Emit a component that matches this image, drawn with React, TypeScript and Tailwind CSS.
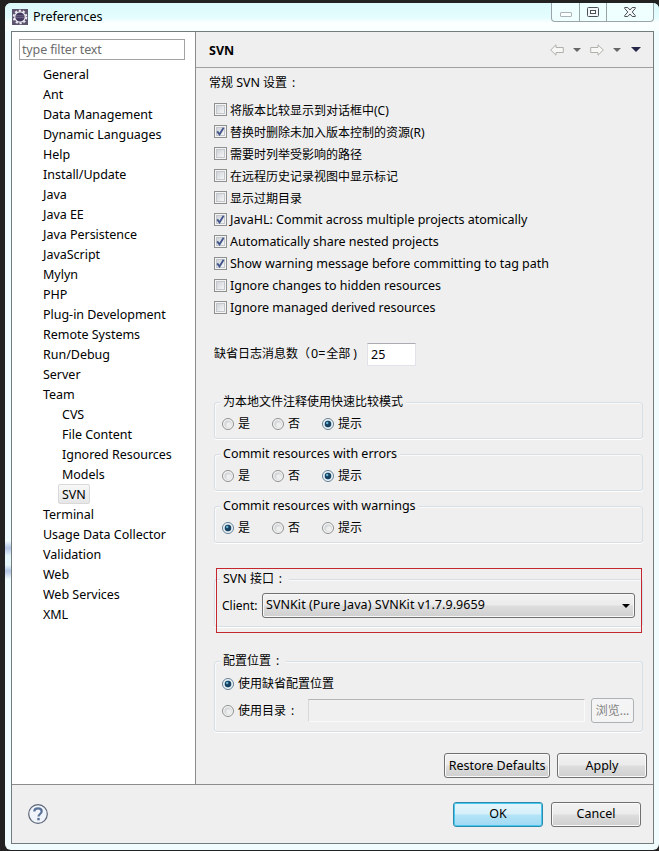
import React, { useState } from 'react';
import clsx from 'clsx';

const treeItems = [
  { label: 'General' },
  { label: 'Ant' },
  { label: 'Data Management' },
  { label: 'Dynamic Languages' },
  { label: 'Help' },
  { label: 'Install/Update' },
  { label: 'Java' },
  { label: 'Java EE' },
  { label: 'Java Persistence' },
  { label: 'JavaScript' },
  { label: 'Mylyn' },
  { label: 'PHP' },
  { label: 'Plug-in Development' },
  { label: 'Remote Systems' },
  { label: 'Run/Debug' },
  { label: 'Server' },
  { label: 'Team' },
  { label: 'CVS', child: true },
  { label: 'File Content', child: true },
  { label: 'Ignored Resources', child: true },
  { label: 'Models', child: true },
  { label: 'SVN', child: true },
  { label: 'Terminal' },
  { label: 'Usage Data Collector' },
  { label: 'Validation' },
  { label: 'Web' },
  { label: 'Web Services' },
  { label: 'XML' },
];

const initialOptions = [
  { label: '将版本比较显示到对话框中(C)', checked: false },
  { label: '替换时删除未加入版本控制的资源(R)', checked: true },
  { label: '需要时列举受影响的路径', checked: false },
  { label: '在远程历史记录视图中显示标记', checked: false },
  { label: '显示过期目录', checked: false },
  { label: 'JavaHL: Commit across multiple projects atomically', checked: true, latin: true },
  { label: 'Automatically share nested projects', checked: true, latin: true },
  { label: 'Show warning message before committing to tag path', checked: true, latin: true },
  { label: 'Ignore changes to hidden resources', checked: false, latin: true },
  { label: 'Ignore managed derived resources', checked: false, latin: true },
];

const latinText = 'text-[12.5px] tracking-[-0.02px]';

// Colon centred in a full-width cell
const Colon: React.FC = () => <span className="inline-block w-3 pl-px text-center">:</span>;

const Checkbox: React.FC<{ checked: boolean }> = ({ checked }) => (
  <span className="mb-px flex h-[13px] w-[13px] shrink-0 border border-[#8e8f8f] bg-[#f4f4f4] p-px">
    <span className="flex h-[9px] w-[9px] border border-[#c3c7cb] bg-linear-to-br from-[#cfd3d8] to-[#f6f6f6]">
      {checked && (
        <svg viewBox="0 0 9 9" className="-m-px h-[9px] w-[9px] shrink-0">
          <path d="M1.2 4.4 L3.5 7.4 L7.6 0.8" fill="none" stroke="#43568c" strokeWidth="1.9" />
        </svg>
      )}
    </span>
  </span>
);

const Radio: React.FC<{ label: React.ReactNode; checked: boolean; onClick?: () => void; className?: string }> = ({
  label,
  checked,
  onClick,
  className,
}) => (
  <button onClick={onClick} className={clsx('flex h-4 items-center gap-1', className)}>
    <svg viewBox="0 0 12 12" className="h-3 w-3 shrink-0">
      <circle cx="6" cy="6" r="5.5" fill="#f6f6f6" stroke={checked ? '#5f7f96' : '#8e8f8f'} />
      <circle cx="6" cy="6" r="3.8" fill={checked ? '#b5d5e6' : '#d5d8da'} />
      {checked && <circle cx="6" cy="6" r="3.2" fill="#17405f" />}
      {checked ? (
        <circle cx="5.2" cy="5" r="1.2" fill="#69b4d6" />
      ) : (
        <circle cx="6.8" cy="6.8" r="2.6" fill="#eeeeee" />
      )}
    </svg>
    <span className="whitespace-nowrap">{label}</span>
  </button>
);

const Group: React.FC<{ title: React.ReactNode; className?: string; children: React.ReactNode }> = ({
  title,
  className,
  children,
}) => (
  <fieldset
    className={clsx(
      'w-[429px] rounded-[3px] border border-[#d5dfe5] shadow-[0_1px_0_#fff,inset_1px_1px_0_#fafafa]',
      className
    )}
  >
    <legend className="ml-[5px] h-4 bg-[#efefef] px-[3px] leading-4">{title}</legend>
    {children}
  </fieldset>
);

const PromptGroup: React.FC<{ title: string; initial: number; latin?: boolean; className?: string }> = ({
  title,
  initial,
  latin,
  className,
}) => {
  const [selected, setSelected] = useState(initial);

  return (
    <Group title={<span className={clsx(latin && latinText)}>{title}</span>} className={clsx('h-[45px]', className)}>
      <div className="mt-[6px] flex pl-[7px]">
        {['是', '否', '提示'].map((label, i) => (
          <Radio
            key={label}
            label={label}
            checked={selected === i}
            onClick={() => setSelected(i)}
            className="w-[50px]"
          />
        ))}
      </div>
    </Group>
  );
};

const PushButton: React.FC<{ label: string; primary?: boolean; className?: string }> = ({
  label,
  primary,
  className,
}) => (
  <button
    className={clsx(
      'h-[25px] rounded-[3px] border leading-[22px] whitespace-nowrap',
      latinText,
      primary
        ? 'border-[#2f8bad] bg-[linear-gradient(#e6f6fc_0%,#d5effa_48%,#b4e3f7_52%,#a0daf3_100%)] shadow-[inset_0_0_0_1px_#48c8ef]'
        : 'border-[#707070] bg-[linear-gradient(#f2f2f2_0%,#ebebeb_48%,#dddddd_52%,#cfcfcf_100%)] shadow-[inset_0_0_0_1px_#fafafa]',
      className
    )}
  >
    {label}
  </button>
);

const EclipseIcon: React.FC = () => (
  <svg viewBox="0 0 16 16" className="h-4 w-4">
    <rect width="16" height="16" fill="#5d5470" />
    <circle cx="8" cy="8" r="6.3" fill="none" stroke="#eeecf3" strokeWidth="2" strokeDasharray="2.2 1.76" />
    <circle cx="8" cy="8" r="5.2" fill="#41375c" stroke="#eeecf3" strokeWidth="1.2" />
    <path d="M3.5 6.8h9M3.5 8.6h9" stroke="#857c9d" strokeWidth="0.7" />
  </svg>
);

const TitleBar: React.FC = () => (
  <div className="flex h-7 justify-between rounded-t-[6px] bg-[linear-gradient(#dcf9fb_0px,#e4fdfe_14px,#fbffff_20px,#f8ffff_28px)] pl-[7px]">
    <div className="flex items-center gap-[5px]">
      <EclipseIcon />
      <span className={latinText}>Preferences</span>
    </div>
    <div className="mr-[5px] flex h-[19px] w-[103px] rounded-b-[4px] border border-t-0 border-[#99a5a8] bg-[#efffff]">
      <span className="flex w-7 justify-center border-r border-[#99a5a8]">
        <svg viewBox="0 0 12 5" className="mt-[9px] h-[5px] w-3">
          <rect x="0.5" y="0.5" width="11" height="4" rx="0.5" fill="#fbffff" stroke="#abb3b8" />
        </svg>
      </span>
      <span className="flex w-[27px] justify-center border-r border-[#99a5a8]">
        <svg viewBox="0 0 12 10" className="mt-1 h-[10px] w-3">
          <rect x="0.5" y="0.5" width="11" height="9" rx="1" fill="#f2f6f8" stroke="#4b5159" />
          <rect x="3.5" y="3.5" width="5" height="3" fill="#ffffff" stroke="#4b5159" />
        </svg>
      </span>
      <span className="flex flex-1 justify-center">
        <svg viewBox="0 0 12 10" className="mt-1 h-[10px] w-3">
          <path
            d="M0.7 0.5h3.1L6 3 8.2 0.5h3.1v1L8.2 5l3.1 3.5v1H8.2L6 7 3.8 9.5H0.7v-1L3.8 5 0.7 1.5z"
            fill="#f4f7f8"
            stroke="#4b5159"
          />
        </svg>
      </span>
    </div>
  </div>
);

const NavArrows: React.FC = () => (
  <div className="mr-3 flex items-center">
    <svg viewBox="0 0 14 12" className="h-3 w-[14px]">
      <path d="M0.7 6 L6 0.8 V3.5 H13.3 V8.5 H6 V11.2 Z" fill="#f7f7f5" stroke="#b0b0aa" />
    </svg>
    <svg viewBox="0 0 8 4" className="ml-[9px] h-1 w-2">
      <path d="M0 0h8L4 4z" fill="#666666" />
    </svg>
    <svg viewBox="0 0 14 12" className="ml-[9px] h-3 w-[14px]">
      <path d="M13.3 6 L8 0.8 V3.5 H0.7 V8.5 H8 V11.2 Z" fill="#f7f7f5" stroke="#b0b0aa" />
    </svg>
    <svg viewBox="0 0 8 4" className="ml-[9px] h-1 w-2">
      <path d="M0 0h8L4 4z" fill="#666666" />
    </svg>
    <svg viewBox="0 0 10 5" className="ml-[10px] h-[5px] w-[10px]">
      <path d="M0 0h10L5 5z" fill="#26264a" />
    </svg>
  </div>
);

const Sidebar: React.FC = () => {
  const [selected, setSelected] = useState('SVN');

  return (
    <aside className="w-[184px] shrink-0 border-r border-[#8c8c8c] bg-white pt-[7px]">
      <input
        placeholder="type filter text"
        className="ml-[7px] block h-[21px] w-[166px] border border-[#a3a3a3] px-[2px] text-[12.5px] tracking-[-0.15px] placeholder:text-[#6d6d6d]"
      />
      <ul className="mt-1">
        {treeItems.map((item) => (
          <li key={item.label} className={clsx('flex h-5 items-center', item.child ? 'pl-[46px]' : 'pl-[27px]')}>
            <button
              onClick={() => setSelected(item.label)}
              className={clsx(
                'h-5 rounded-[2px] border px-[3px] leading-[17px]',
                latinText,
                selected === item.label
                  ? 'border-[#d9d9d9] bg-linear-to-b from-[#f8f8f8] to-[#e6e6e6]'
                  : 'border-transparent'
              )}
            >
              {item.label}
            </button>
          </li>
        ))}
      </ul>
    </aside>
  );
};

const SvnPage: React.FC = () => {
  const [options, setOptions] = useState(initialOptions);
  const [useDefault, setUseDefault] = useState(true);

  const toggle = (index: number) => {
    setOptions(options.map((o, i) => (i === index ? { ...o, checked: !o.checked } : o)));
  };

  return (
    <main className="flex min-w-0 flex-1 flex-col">
      <header className="flex h-9 items-center justify-between border-b border-[#a0a0a0] pl-[13px]">
        <h1 className="pt-[3px] text-[12.5px] font-bold">SVN</h1>
        <NavArrows />
      </header>

      <div className="flex flex-col items-start pt-[5px] pl-[13px]">
        <div className="h-5 leading-5">
          常规 <span className={latinText}>SVN</span> 设置
          <Colon />
        </div>

        <div className="mt-[6px] ml-[5px]">
          {options.map((option, i) => (
            <button key={option.label} onClick={() => toggle(i)} className="flex h-[22px] items-center gap-[3px]">
              <Checkbox checked={option.checked} />
              <span className={clsx('whitespace-nowrap', option.latin ? latinText : 'pt-px')}>{option.label}</span>
            </button>
          ))}
        </div>

        <div className="mt-6 ml-[5px] flex items-center">
          <span className="w-[153px] whitespace-nowrap">
            缺省日志消息数（<span className="px-px text-[12.5px]">0=</span>全部
            <span className="pl-[3px]">)</span>
          </span>
          <input
            defaultValue="25"
            className="h-[23px] w-[49px] border border-[#e2e3ea] border-t-[#abadb3] bg-white px-[3px] text-[12.5px]"
          />
        </div>

        <PromptGroup title="为本地文件注释使用快速比较模式" initial={2} className="mt-7 ml-[5px]" />
        <PromptGroup title="Commit resources with errors" initial={2} latin className="mt-[7px] ml-[5px]" />
        <PromptGroup title="Commit resources with warnings" initial={0} latin className="mt-[7px] ml-[5px]" />

        <div className="relative mt-7 ml-[5px]">
          <Group
            title={
              <>
                <span className={latinText}>SVN</span> 接口
                <Colon />
              </>
            }
            className="h-14"
          >
            <div className="mt-[6px] flex items-center pl-[7px]">
              <span className="w-10 text-[12px]">Client:</span>
              <button className="flex h-[25px] w-[373px] items-center justify-between rounded-[3px] border border-[#707070] bg-[linear-gradient(#f2f2f2_0%,#ebebeb_48%,#dddddd_52%,#cfcfcf_100%)] pr-1 pl-[3px] shadow-[inset_0_0_0_1px_#f8f8f8]">
                <span className="text-[12.5px] tracking-[0.06px]">SVNKit (Pure Java) SVNKit v1.7.9.9659</span>
                <svg viewBox="0 0 8 4" className="h-1 w-2">
                  <path d="M0 0h8L4 4z" fill="#000000" />
                </svg>
              </button>
            </div>
          </Group>
          {/* Highlight frame drawn over the group */}
          <div className="pointer-events-none absolute -top-[3px] left-[2px] h-[65px] w-[426px] border border-[#c4272d]" />
        </div>

        <Group
          title={
            <>
              配置位置
              <Colon />
            </>
          }
          className="mt-[26px] ml-[5px] h-[79px]"
        >
          <Radio
            label="使用缺省配置位置"
            checked={useDefault}
            onClick={() => setUseDefault(true)}
            className="mt-[7px] ml-[7px]"
          />
          <div className="mt-[6px] flex items-center pl-[7px]">
            <Radio
              label={
                <>
                  使用目录
                  <Colon />
                </>
              }
              checked={!useDefault}
              onClick={() => setUseDefault(false)}
              className="w-[86px]"
            />
            <input
              disabled={useDefault}
              className="h-[23px] w-[277px] border border-[#fafafa] border-t-[#b5b5b5] border-l-[#d8d8d8] bg-[#f0f0f0]"
            />
            <button
              disabled={useDefault}
              className="ml-[6px] h-[25px] w-[43px] rounded-[3px] border border-[#adb2b5] bg-[#f4f4f4] leading-[22px] text-[#838383]"
            >
              浏览...
            </button>
          </div>
        </Group>
      </div>

      <div className="mt-[21px] flex justify-end gap-[7px] pr-[6px]">
        <PushButton label="Restore Defaults" className="w-[106px]" />
        <PushButton label="Apply" className="w-[90px]" />
      </div>
    </main>
  );
};

const App: React.FC = () => (
  <div className="h-[851px] w-[659px] overflow-hidden bg-[#222222] pt-[3px] pl-[5px] font-['Noto_Sans','Noto_Sans_CJK_SC',sans-serif] text-[12px] text-black">
    <div className="flex h-[847px] w-[654px] flex-col rounded-[6px] bg-[linear-gradient(#f0fcfd_538px,#b3c6e6_545px,#e6f8fc_553px,#e6f8fc_562px,#b3c6e6_568px,#f0fcfd_576px)]">
      <TitleBar />
      <div className="flex">
        <div className="ml-[6px] flex h-[813px] w-[643px] flex-col border border-[#737b7d] bg-[#efefef]">
          <div className="flex h-[753px] shrink-0 border-b border-[#8c8c8c]">
            <Sidebar />
            <SvnPage />
          </div>
          <footer className="flex flex-1 items-center justify-between pr-3 pl-4">
            <svg viewBox="0 0 20 20" className="h-5 w-5">
              <circle cx="10" cy="10" r="9.3" fill="#f0f4fb" stroke="#5b6577" strokeWidth="1.2" />
              <path
                d="M6.3 7.6C6.3 5.6 7.7 4.3 10 4.3c2.2 0 3.7 1.2 3.7 3 0 2.6-3.2 2.8-3.2 5.2"
                fill="none"
                stroke="#5b7398"
                strokeWidth="2.2"
              />
              <rect x="9.3" y="13.9" width="2.4" height="2.4" fill="#5b7398" />
            </svg>
            <div className="flex gap-2">
              <PushButton label="OK" primary className="w-[90px]" />
              <PushButton label="Cancel" className="w-[90px]" />
            </div>
          </footer>
        </div>
        <div className="h-[813px] flex-1 bg-[#f0fcfd]" />
      </div>
    </div>
  </div>
);

export default App;
